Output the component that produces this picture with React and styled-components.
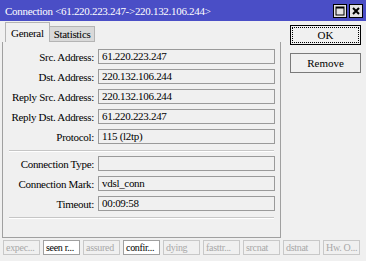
import React from "react";
import styled, { createGlobalStyle } from "styled-components";

const Global = createGlobalStyle`
  html, body { margin: 0; padding: 0; background: #f0f0f0; }
  body { font-family: "Liberation Serif", "Times New Roman", serif; }
  * { box-sizing: border-box; }
`;

const Window = styled.div`
  width: 366px;
  height: 261px;
  background: #f0f0f0;
  display: flex;
  flex-direction: column;
  overflow: hidden;
  font-family: "Liberation Serif", "Times New Roman", serif;
`;

const TitleBar = styled.div`
  height: 21px;
  background: #4a4ec6;
  display: flex;
  align-items: center;
  padding: 0 3px 0 5px;
`;

const Title = styled.div`
  flex: 1;
  color: #fff;
  font-size: 11px;
  letter-spacing: -0.3px;
  white-space: nowrap;
`;

const TitleButton = styled.div`
  width: 14px;
  height: 14px;
  margin-left: 2px;
  background: #e4e4e4;
  border: 1px solid #000;
  display: flex;
  align-items: center;
  justify-content: center;
`;

const Body = styled.div`
  flex: 1;
  display: flex;
  padding: 1px 6px 0 2px;
  gap: 9px;
`;

const LeftSide = styled.div`
  width: 279px;
  display: flex;
  flex-direction: column;
`;

const Tabs = styled.div`
  display: flex;
  align-items: flex-end;
  padding-left: 3px;
  height: 20px;
`;

const Tab = styled.div`
  height: ${(p) => (p.$active ? "20px" : "16px")};
  padding: 0 ${(p) => (p.$active ? "5px" : "4px")};
  background: ${(p) => (p.$active ? "#f0f0f0" : "#d9d9d9")};
  border: 1px solid #b4b4b4;
  border-bottom: ${(p) => (p.$active ? "none" : "1px solid #b4b4b4")};
  font-size: 11px;
  letter-spacing: -0.3px;
  display: flex;
  align-items: center;
  margin-right: ${(p) => (p.$active ? "-1px" : "0")};
  position: relative;
  z-index: ${(p) => (p.$active ? 1 : 0)};
`;

const Panel = styled.div`
  height: 196px;
  border: 1px solid #a0a0a0;
  border-top: none;
  padding: 7px 6px 0 6px;
  display: flex;
  flex-direction: column;
`;

const FieldGroup = styled.div`
  display: flex;
  flex-direction: column;
  gap: 5px;
`;

const Row = styled.div`
  display: grid;
  grid-template-columns: 85px 177px;
  column-gap: 4px;
  align-items: center;
  height: 15px;
`;

const Label = styled.div`
  text-align: right;
  font-size: 11px;
  letter-spacing: -0.3px;
  white-space: nowrap;
  color: #000;
`;

const Field = styled.div`
  height: 15px;
  border: 1px solid #9a9a9a;
  background: #f0f0f0;
  font-size: 11px;
  letter-spacing: -0.3px;
  line-height: 13px;
  padding-left: 3px;
  white-space: nowrap;
  overflow: hidden;
`;

const Separator = styled.div`
  height: 2px;
  border-top: 1px solid #c6c6c6;
  border-bottom: 1px solid #ffffff;
  margin: ${(p) => p.$m || "6px 0 4px"};
`;

const RightSide = styled.div`
  display: flex;
  flex-direction: column;
  gap: 8px;
  padding-top: 3px;
`;

const Button = styled.div`
  width: 71px;
  height: 20px;
  border: 1px solid ${(p) => (p.$default ? "#000" : "#7a7a7a")};
  background: #f0f0f0;
  font-size: 11px;
  display: flex;
  align-items: center;
  justify-content: center;
  position: relative;
  &::after {
    content: "";
    display: ${(p) => (p.$default ? "block" : "none")};
    position: absolute;
    inset: 1px;
    border: 1px dotted #000;
  }
`;

const StatusBar = styled.div`
  display: flex;
  gap: 3px;
  padding: 2px 2px 6px 3px;
`;

const StatusCell = styled.div`
  width: 37px;
  height: 15px;
  border: 1px solid ${(p) => (p.$on ? "#a0a0a0" : "#c8c8c8")};
  background: ${(p) => (p.$on ? "#ffffff" : "#f0f0f0")};
  color: ${(p) => (p.$on ? "#000" : "#a8a8a8")};
  font-size: 10px;
  letter-spacing: -0.3px;
  line-height: 13px;
  padding-left: 2px;
  white-space: nowrap;
  overflow: hidden;
`;

const rows1 = [
  ["Src. Address:", "61.220.223.247"],
  ["Dst. Address:", "220.132.106.244"],
  ["Reply Src. Address:", "220.132.106.244"],
  ["Reply Dst. Address:", "61.220.223.247"],
  ["Protocol:", "115 (l2tp)"],
];
const rows2 = [
  ["Connection Type:", ""],
  ["Connection Mark:", "vdsl_conn"],
  ["Timeout:", "00:09:58"],
];
const status = [
  ["expec...", false],
  ["seen r...", true],
  ["assured", false],
  ["confir...", true],
  ["dying", false],
  ["fasttr...", false],
  ["srcnat", false],
  ["dstnat", false],
  ["Hw. O...", false],
];

export default function App() {
  return (
    <Window>
      <Global />
      <TitleBar>
        <Title>Connection &lt;61.220.223.247-&gt;220.132.106.244&gt;</Title>
        <TitleButton>
          <svg width="10" height="10" viewBox="0 0 10 10">
            <rect x="1" y="1" width="8" height="8" fill="none" stroke="#000" strokeWidth="1" />
            <rect x="1" y="1" width="8" height="1.5" fill="#000" />
          </svg>
        </TitleButton>
        <TitleButton>
          <svg width="10" height="10" viewBox="0 0 10 10">
            <path d="M2 2 L8 8 M8 2 L2 8" stroke="#000" strokeWidth="2" />
          </svg>
        </TitleButton>
      </TitleBar>
      <Body>
        <LeftSide>
          <Tabs>
            <Tab $active>General</Tab>
            <Tab>Statistics</Tab>
          </Tabs>
          <Panel>
            <FieldGroup>
              {rows1.map(([l, v]) => (
                <Row key={l}>
                  <Label>{l}</Label>
                  <Field>{v}</Field>
                </Row>
              ))}
            </FieldGroup>
            <Separator $m="6px 0 4px" />
            <FieldGroup>
              {rows2.map(([l, v]) => (
                <Row key={l}>
                  <Label>{l}</Label>
                  <Field>{v}</Field>
                </Row>
              ))}
            </FieldGroup>
            <Separator $m="6px 0 0" />
          </Panel>
        </LeftSide>
        <RightSide>
          <Button $default>OK</Button>
          <Button>Remove</Button>
        </RightSide>
      </Body>
      <StatusBar>
        {status.map(([t, on]) => (
          <StatusCell key={t} $on={on}>{t}</StatusCell>
        ))}
      </StatusBar>
    </Window>
  );
}
